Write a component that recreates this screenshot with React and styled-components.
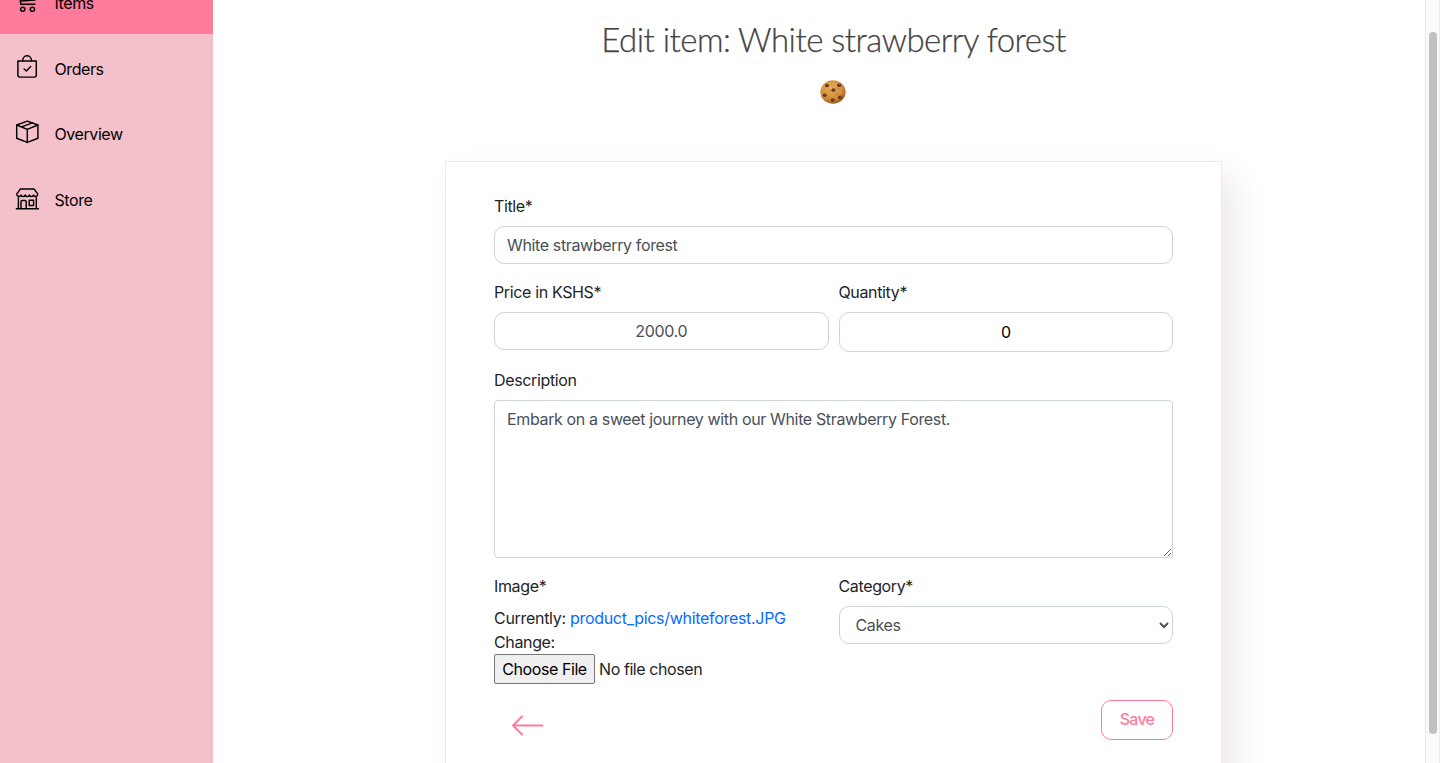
import React from "react";
import styled, { createGlobalStyle } from "styled-components";

const GlobalStyle = createGlobalStyle`
  *, *::before, *::after { box-sizing: border-box; }
  html, body { margin: 0; height: 100%; overflow: hidden; }
  body {
    background: #fff;
    color: #212529;
    font: 400 16px/24px Inter, "Liberation Sans", sans-serif;
    letter-spacing: -0.36px;
  }
  input, select, textarea, button { font: inherit; letter-spacing: inherit; margin: 0; }
`;

const Page = styled.div`
  display: flex;
  height: 763px;
  overflow: hidden;
`;

const Sidebar = styled.nav`
  flex: 0 0 213px;
  background: #f4c0ca;
  overflow: hidden;
`;

const NavList = styled.div`
  margin-top: -31.5px;
`;

const NavItem = styled.a`
  display: flex;
  align-items: center;
  gap: 15.5px;
  height: 65.5px;
  padding-left: 15px;
  color: #000;
  text-decoration: none;
  background: ${(p) => (p.$active ? "#ff7b9c" : "transparent")};
`;

const NavIcon = styled.svg`
  flex: none;
  width: 24px;
  height: 24px;
  fill: none;
  stroke: #000;
  stroke-width: 1.45;
  stroke-linecap: round;
  stroke-linejoin: round;
`;

const NavLabel = styled.span`
  padding-top: 4px;
  letter-spacing: -0.42px;
`;

const Main = styled.main`
  flex: 1;
  display: flex;
  flex-direction: column;
  align-items: center;
  padding: 19px 0 0 29px;
`;

const Heading = styled.h1`
  margin: 0;
  font: 300 33px/40px Lato, sans-serif;
  letter-spacing: -0.53px;
  color: #444;
  -webkit-text-stroke: 0.25px #444;
`;

const Cookie = styled.svg`
  flex: none;
  width: 26px;
  height: 24px;
  margin: 21px 1px 0 0;
`;

const Card = styled.form`
  width: 777px;
  height: 700px;
  flex: none;
  margin-top: 57px;
  padding: 32px 48px;
  border: 1px solid #ebebeb;
  background: #fff;
  box-shadow: 13px 13px 30px #f0eae9;
`;

const Row = styled.div`
  display: grid;
  grid-template-columns: ${(p) => (p.$split ? "1fr 1fr" : "1fr")};
  gap: 10px;
  align-items: start;
  margin-bottom: 16px;
`;

const Field = styled.div`
  display: flex;
  flex-direction: column;
`;

const Label = styled.label`
  margin-bottom: 8px;
`;

const Input = styled.input`
  width: 100%;
  height: ${(p) => (p.$tall ? 40 : 38)}px;
  padding: 6px 12px;
  border: 1px solid #ced4da;
  border-radius: 10px;
  background: #fff;
  color: ${(p) => (p.$tall ? "#000" : "#495057")};
  text-align: ${(p) => (p.$center ? "center" : "left")};
  outline: 0;
`;

const TextArea = styled.textarea`
  display: block;
  width: 100%;
  height: 158px;
  padding: 6px 12px;
  border: 1px solid #ced4da;
  border-radius: 4px;
  background: #fff;
  color: #495057;
  resize: vertical;
  outline: 0;
`;

const Select = styled.select`
  width: 100%;
  height: 38px;
  padding: 6px 12px;
  border: 1px solid #ced4da;
  border-radius: 10px;
  background: #fff;
  color: #495057;
`;

const CurrentFile = styled.div`
  letter-spacing: -0.3px;
`;

const FileLink = styled.a`
  color: #066bff;
  text-decoration: none;
`;

const FilePicker = styled.div`
  display: flex;
  align-items: center;
  gap: 4px;
  height: 30px;
  letter-spacing: -0.42px;
`;

const FileButton = styled.button`
  width: 101px;
  height: 30px;
  padding: 0;
  border: 1px solid #767676;
  border-radius: 2px;
  background: #efefef;
  color: #000;
`;

const Actions = styled.div`
  display: flex;
  justify-content: space-between;
  align-items: flex-start;
`;

const BackArrow = styled.svg`
  width: 34px;
  height: 24px;
  margin: 13px 0 0 17px;
  fill: none;
  stroke: #ff7b9c;
  stroke-width: 2;
  stroke-linecap: round;
  stroke-linejoin: round;
`;

const SaveButton = styled.button`
  width: 72px;
  height: 40px;
  padding: 0 0 2px;
  border: 1px solid #ff7b9c;
  border-radius: 10px;
  background: #fff;
  color: #ff7b9c;
  font-weight: 500;
  letter-spacing: -0.7px;
`;

const ScrollTrack = styled.div`
  flex: 0 0 15px;
  padding: 32px 2px 0 3px;
  background: #fafafa;
  border-left: 1px solid #e8e8e8;
  border-right: 1px solid #ededed;
`;

const ScrollThumb = styled.div`
  width: 8px;
  height: 702px;
  border-radius: 4px;
  background: #c1c1c1;
`;

const CartIcon = () => (
  <NavIcon viewBox="0 0 24 24">
    <path d="M1.500 1.500h2.800l1.400 13.800h14.300M5.400 12l14.600-1 1.500-7H4.600" />
    <circle cx="7.700" cy="20.300" r="2.100" />
    <circle cx="17.400" cy="20.300" r="2.100" />
  </NavIcon>
);

const BagIcon = () => (
  <NavIcon viewBox="0 0 24 24">
    <path d="M2.900 5.900h18.400v14.200a2 2 0 0 1-2 2H4.900a2 2 0 0 1-2-2z" />
    <path d="M7.700 5.700a4.400 5 0 0 1 8.800 0M9.100 13.900l2.300 2.200 4.300-4.500" />
  </NavIcon>
);

const BoxIcon = () => (
  <NavIcon viewBox="0 0 24 24">
    <path d="M12.300 1.100 22.900 5v13.300l-10.600 4.100-10.600-4.100V5z" />
    <path d="M1.700 5l10.600 4.300L22.900 5M12.300 9.300v13.100M6.500 6.900l11-4" />
  </NavIcon>
);

const StoreIcon = () => (
  <NavIcon viewBox="0 0 24 24">
    <path d="M5.500 2.900h13.500l3.700 5c.3 2.600-2.900 3.400-4.100 1.200-1 2-3.200 2-4.200 0-1 2-3.200 2-4.200 0-1 2-3.200 2-4.200 0C4.800 11.300 1.500 10.500 1.800 7.900z" />
    <path d="M1.400 22.800h22M3.400 11.800v11M21.300 11.800v11M6 22.800v-7.300a1 1 0 0 1 1-1h3.200a1 1 0 0 1 1 1v7.300M14.200 14.300h4.400v5.200h-4.400z" />
  </NavIcon>
);

const CHIPS = [[7, 5.5], [19.2, 5.2], [13.5, 10], [4.8, 15.2], [20, 17.2], [12.7, 20]];

const CookieIcon = () => (
  <Cookie viewBox="0 0 26 24">
    <defs>
      <radialGradient id="dough" cx="42%" cy="34%" r="68%">
        <stop offset="0" stopColor="#e8ad58" />
        <stop offset=".65" stopColor="#d58f3a" />
        <stop offset="1" stopColor="#99571c" />
      </radialGradient>
    </defs>
    <ellipse cx="13" cy="12" rx="12.600" ry="11.800" fill="url(#dough)" />
    <path d="M9 10.500l3 .5M16 14l2 .8M8 18l2-1M17 8l2 1" stroke="#ad6823" strokeWidth=".8" />
    {CHIPS.map(([x, y]) => (
      <g key={`${x}-${y}`}>
        <ellipse cx={x} cy={y} rx="2" ry="1.800" fill="#5c2d17" />
        <circle cx={x + 0.3} cy={y - 0.5} r=".7" fill="#8b6656" />
      </g>
    ))}
  </Cookie>
);

const NAV = [
  { label: "Items", Icon: CartIcon, active: true },
  { label: "Orders", Icon: BagIcon },
  { label: "Overview", Icon: BoxIcon },
  { label: "Store", Icon: StoreIcon },
];

export default function App() {
  return (
    <>
      <GlobalStyle />
      <Page>
        <Sidebar>
          <NavList>
            {NAV.map(({ label, Icon, active }) => (
              <NavItem key={label} $active={active}>
                <Icon />
                <NavLabel>{label}</NavLabel>
              </NavItem>
            ))}
          </NavList>
        </Sidebar>
        <Main>
          <Heading>Edit item: White strawberry forest</Heading>
          <CookieIcon />
          <Card>
            <Row>
              <Field>
                <Label>Title*</Label>
                <Input defaultValue="White strawberry forest" />
              </Field>
            </Row>
            <Row $split>
              <Field>
                <Label>Price in KSHS*</Label>
                <Input $center defaultValue="2000.0" />
              </Field>
              <Field>
                <Label>Quantity*</Label>
                <Input $center $tall defaultValue="0" />
              </Field>
            </Row>
            <Row>
              <Field>
                <Label>Description</Label>
                <TextArea defaultValue="Embark on a sweet journey with our White Strawberry Forest." />
              </Field>
            </Row>
            <Row $split>
              <Field>
                <Label>Image*</Label>
                <CurrentFile>
                  Currently: <FileLink>product_pics/whiteforest.JPG</FileLink>
                </CurrentFile>
                <div>Change:</div>
                <FilePicker>
                  <FileButton type="button">Choose File</FileButton>
                  <span>No file chosen</span>
                </FilePicker>
              </Field>
              <Field>
                <Label>Category*</Label>
                <Select defaultValue="Cakes">
                  <option>Cakes</option>
                </Select>
              </Field>
            </Row>
            <Actions>
              <BackArrow viewBox="0 0 34 24">
                <path d="M31.500 12.500H2M11 3.500l-9 9 9 9" />
              </BackArrow>
              <SaveButton type="button">Save</SaveButton>
            </Actions>
          </Card>
        </Main>
        <ScrollTrack>
          <ScrollThumb />
        </ScrollTrack>
      </Page>
    </>
  );
}
